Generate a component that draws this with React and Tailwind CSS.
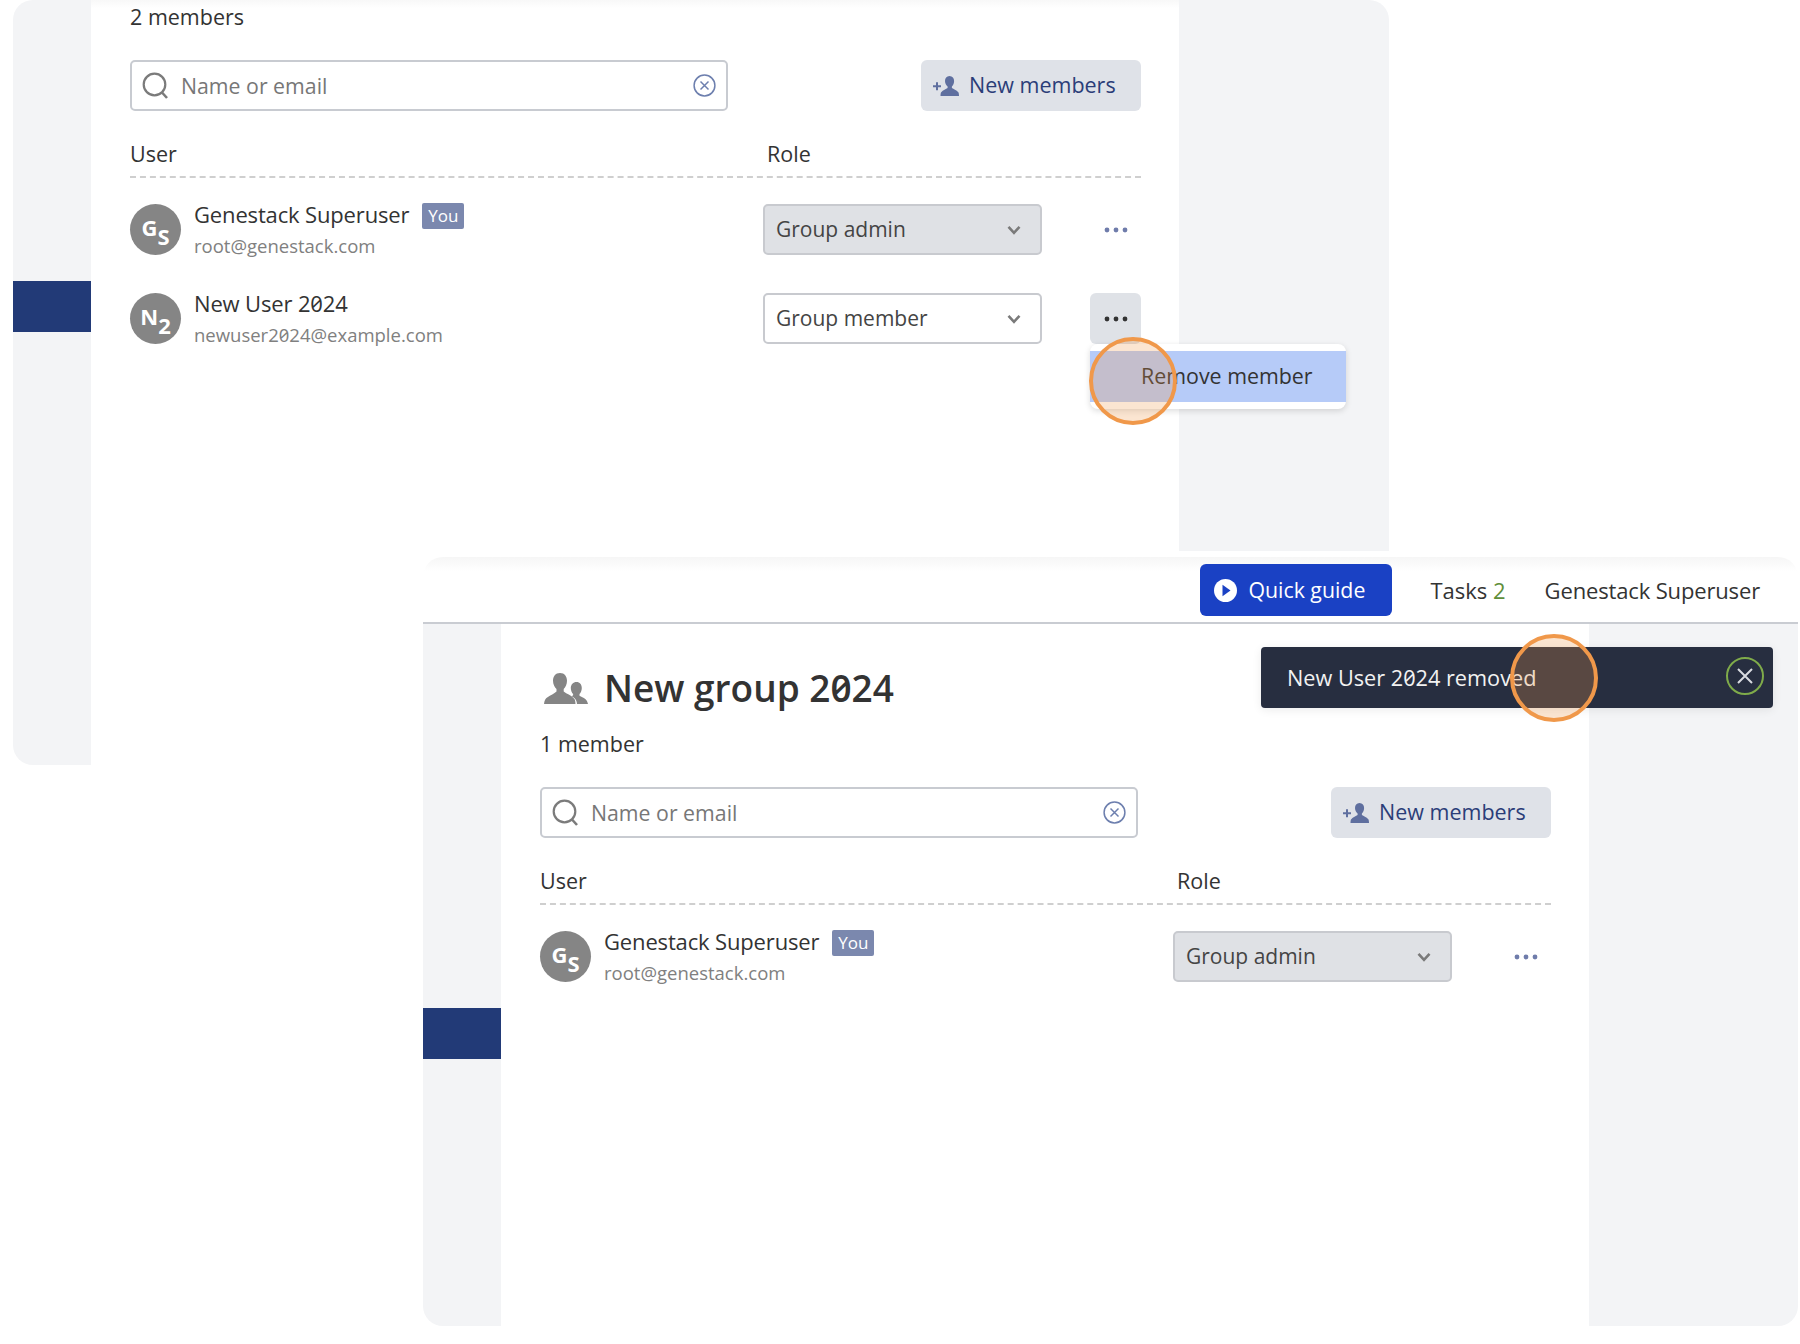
import React from "react";

const SearchIcon = () => (
  <svg width="27" height="27" viewBox="0 0 27 27" fill="none" stroke="#7b7b7b" strokeWidth="2.2" className="shrink-0">
    <circle cx="12.5" cy="12.5" r="10.8" />
    <path d="M20 20.5l5 5.5" strokeWidth="2.6" />
  </svg>
);
const ClearIcon = () => (
  <svg width="23" height="23" viewBox="0 0 23 23" fill="none" stroke="#6d7fae" strokeWidth="1.5" className="shrink-0">
    <circle cx="11.5" cy="11.5" r="10.4" />
    <path d="M7.5 7.5l8 8M15.5 7.5l-8 8" />
  </svg>
);
const UserPlus = () => (
  <svg width="26" height="20" viewBox="0 0 26 20" fill="#5f6f9f" className="shrink-0">
    <path d="M0 9.2h3V6.2h2v3h3v2H5v3H3v-3H0z" />
    <path d="M16.5 0c3 0 4.6 2.2 4.6 5 0 2.300-1 4.300-2.200 5.400v1.600c1.500 1.300 4.600 1.800 6.400 4.200.5.700.700 1.800.700 3.800H7.500c0-2 .2-3.100.7-3.800 1.800-2.400 4.900-2.900 6.400-4.200v-1.600C13.300 9.300 12 7.300 12 5c0-2.800 1.600-5 4.500-5z" />
  </svg>
);
const GroupIcon = () => (
  <svg width="44" height="31" viewBox="0 0 44 31" fill="#858585" className="shrink-0">
    <path d="M16 0c4.600 0 7 3.400 7 7.800 0 3.500-1.500 6.500-3.300 8.200v2.500c1.700 1.500 4 2.400 6.300 3.800 1.500.9 3 2.200 4 3.200.9.900 1.500 2.800 1.500 5.500H0c.3-3.500 1.500-5.500 3.500-6.800 3-2 6.700-3.300 9-5.700V16C10.600 14.300 9 11.300 9 7.800 9 3.400 11.400 0 16 0z" />
    <path d="M32.500 9c3.300 0 5.300 2.600 5.300 6 0 2.600-1 4.800-2.300 6.100v1.700c1.700 1.200 4 1.900 5.800 3.200 1.300 1 2.200 2.700 2.700 5H33c-.3-2.700-1-4.600-3-6.200-.8-.6-1.500-1.100-2.300-1.600l.5-.3c.4-.3.700-.5.900-.7v-1.100c-1.300-1.300-2.300-3.500-2.300-6.100 0-3.400 2.400-6 5.700-6z" />
  </svg>
);
const Chevron = () => (
  <svg width="14" height="10" viewBox="0 0 14 10" fill="none" stroke="#7a7a7a" strokeWidth="2.6" className="shrink-0">
    <path d="M1.500 1.800L7 7.800l5.500-6" />
  </svg>
);
const Dots = ({ color }) => (
  <svg width="24" height="6" viewBox="0 0 24 6" fill={color} className="shrink-0">
    <circle cx="3" cy="3" r="2.400" />
    <circle cx="12" cy="3" r="2.400" />
    <circle cx="21" cy="3" r="2.400" />
  </svg>
);

const Avatar = ({ a, b }) => (
  <div className="flex h-[51px] w-[51px] shrink-0 items-center justify-center rounded-full bg-[#858585] text-white font-bold">
    <span className="-translate-y-[3px] text-[22px] leading-none">{a}</span>
    <span className="translate-y-[6px] text-[22px] leading-none">{b}</span>
  </div>
);

const Row = ({ a, b, name, email, you, role, admin, open }) => (
  <div className="flex h-[51px] items-start">
    <Avatar a={a} b={b} />
    <div className="-mt-[3px] ml-[13px] w-[569px] shrink-0">
      <div className="flex h-[26px] items-center gap-[13px] text-[22px] leading-[26px] text-[#333] slashed-zero">
        <span className="tracking-[-0.15px]">{name}</span>
        {you && (
          <span className="flex h-[26px] w-[42px] translate-y-[2px] items-center justify-center rounded-[2px] bg-[#7b88ae] text-[17px] text-white">
            You
          </span>
        )}
      </div>
      <div className="mt-[7px] text-[18.500px] leading-[24px] text-[#808080] slashed-zero">{email}</div>
    </div>
    <div
      className={`flex h-[51px] w-[279px] shrink-0 items-center justify-between rounded-[5px] border-2 border-[#c8cacf] pl-[11px] pr-[19px] text-[21px] text-[#444] ${admin ? "bg-[#dfe1e5]" : "bg-white"}`}
    >
      <span>{role}</span>
      <Chevron />
    </div>
    <div className="relative ml-[48px]">
      <div className={`flex h-[51px] w-[51px] items-center justify-center rounded-[6px] ${open ? "bg-[#dfe2e7]" : ""}`}>
        <Dots color={open ? "#333" : "#6f7cab"} />
      </div>
      {open && (
        <div className="absolute left-0 top-[51px] z-10 w-[256px] rounded-[8px] bg-white py-[7px] shadow-[0_2px_6px_rgba(0,0,0,0.14)]">
          <div className="flex h-[51px] items-center bg-[#b6cbf8] pl-[51px] text-[21.400px] text-[#333]">Remove member</div>
        </div>
      )}
    </div>
  </div>
);

const Members = ({ count, rows }) => (
  <>
    <div className="h-[26px] text-[21.500px] leading-[26px] text-[#333]">{count}</div>
    <div className="mt-[30px] flex items-center justify-between">
      <div className="flex h-[51px] w-[598px] items-center rounded-[5px] border-2 border-[#c8cbd1] pl-[10px] pr-[10px]">
        <SearchIcon />
        <span className="ml-[12px] flex-1 text-[21.300px] text-[#777]">Name or email</span>
        <ClearIcon />
      </div>
      <div className="flex h-[51px] w-[220px] items-center rounded-[6px] bg-[#dfe2e8] pl-[12px] text-[21.500px] text-[#2b3d78]">
        <UserPlus />
        <span className="ml-[10px]">New members</span>
      </div>
    </div>
    <div className="mt-[30px] flex h-[37px] border-b-2 border-dashed border-[#cfcfcf] text-[21.500px] leading-[26px] text-[#333]">
      <span className="w-[637px]">User</span>
      <span>Role</span>
    </div>
    <div className="mt-[26px] flex flex-col gap-[38px]">
      {rows.map((r) => (
        <Row key={r.name} {...r} />
      ))}
    </div>
  </>
);

const gs = { a: "G", b: "S", name: "Genestack Superuser", email: "root@genestack.com", you: true, role: "Group admin", admin: true };
const nu = { a: "N", b: "2", name: "New User 2024", email: "newuser2024@example.com", role: "Group member", open: true };

const Ring = ({ className }) => (
  <div className={`absolute z-30 h-[88px] w-[88px] rounded-full border-[4px] border-[#f0984a] bg-[#f0964640] ${className}`} />
);

export default function App() {
  return (
    <div className="relative h-[1344px] w-[1800px] overflow-hidden bg-white font-['Open_Sans','Noto_Sans',sans-serif]">
      {/* first window */}
      <div className="absolute left-[13px] top-0 flex h-[765px] w-[1376px] overflow-hidden rounded-[20px] bg-white">
        <div className="w-[78px] shrink-0 bg-[#f3f4f6] pt-[281px]">
          <div className="h-[51px] bg-[#223a77]" />
        </div>
        <div className="w-[1088px] shrink-0 bg-linear-to-b from-[#f8f8f8] to-white to-[8px] pl-[39px] pr-[38px] pt-[4px]">
          <Members count="2 members" rows={[gs, nu]} />
        </div>
        <div className="flex-1 bg-[#f3f4f6]" />
      </div>

      {/* second window */}
      <div className="absolute left-[423px] top-[557px] z-20 flex h-[769px] w-[1375px] flex-col overflow-hidden rounded-[20px] bg-white shadow-[0_0_0_6px_#ffffff]">
        <div className="flex h-[67px] shrink-0 items-center justify-end border-b-2 border-[#c9ccd2] bg-linear-to-b from-[#f6f6f6] to-white to-[14px] pr-[38px] pt-[1px] text-[21.300px] text-[#333]">
          <div className="flex h-[52px] w-[192px] items-center rounded-[6px] bg-[#1a41c4] pl-[14px] text-white">
            <svg width="23" height="23" viewBox="0 0 23 23" className="shrink-0">
              <circle cx="11.5" cy="11.5" r="11.5" fill="#fff" />
              <path d="M8.500 5.800L16.500 11.500 8.500 17.200z" fill="#1a41c4" />
            </svg>
            <span className="ml-[11px]">Quick guide</span>
          </div>
          <div className="ml-[38px] text-[22px]">
            Tasks <span className="text-[#5f8f3a]">2</span>
          </div>
          <div className="ml-[39px] text-[22px] tracking-[-0.15px]">Genestack Superuser</div>
        </div>
        <div className="relative flex flex-1">
          <div className="w-[78px] shrink-0 bg-[#f3f4f6] pt-[384px]">
            <div className="h-[51px] bg-[#223a77]" />
          </div>
          <div className="w-[1088px] shrink-0 pl-[39px] pr-[38px] pt-[42px]">
            <div className="flex h-[44px] items-center">
              <div className="ml-[4px]">
                <GroupIcon />
              </div>
              <h1 className="ml-[16px] text-[37px] font-semibold leading-[44px] text-[#333] slashed-zero">New group 2024</h1>
            </div>
            <div className="mt-[21px]">
              <Members count="1 member" rows={[gs]} />
            </div>
          </div>
          <div className="flex-1 bg-[#f3f4f6]" />
          <div className="absolute right-[25px] top-[23px] flex h-[61px] w-[512px] items-center justify-between rounded-[4px] bg-[#272e40] pl-[26px] pr-[9px] text-[21.700px] text-[#f2f2f2] shadow-[0_2px_10px_rgba(0,0,0,0.08)]">
            <span className="translate-y-[1px] slashed-zero">New User 2024 removed</span>
            <span className="-mt-[4px] flex h-[38px] w-[38px] items-center justify-center rounded-full border-2 border-[#7fab4a]">
              <svg width="18" height="18" viewBox="0 0 18 18" stroke="#d9dbe0" strokeWidth="2" fill="none">
                <path d="M2 2l14 14M16 2L2 16" />
              </svg>
            </span>
          </div>
        </div>
      </div>

      <Ring className="left-[1089px] top-[337px]" />
      <Ring className="left-[1510px] top-[634px]" />
    </div>
  );
}
